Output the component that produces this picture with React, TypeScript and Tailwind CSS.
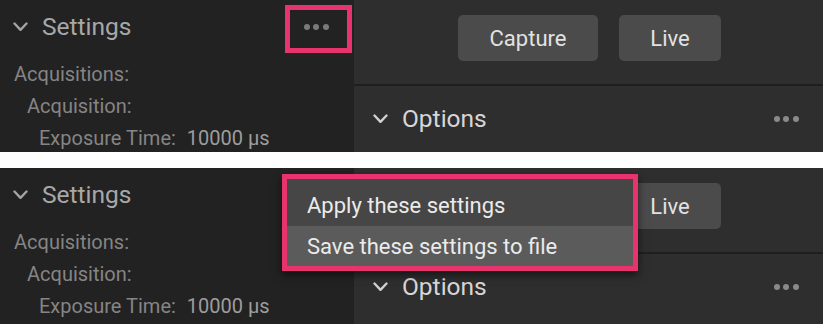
import React from "react";

const Chevron = ({ color }: { color: string }) => (
  <svg width="15" height="10" viewBox="0 0 15 10" fill="none">
    <path d="M1.5 1.5 L7.5 7.8 L13.5 1.5" stroke={color} strokeWidth="2.4" strokeLinecap="round" strokeLinejoin="round" />
  </svg>
);

const Dots = ({ color }: { color: string }) => (
  <div className="flex items-center gap-[3.6px]">
    <span className="block h-[6px] w-[6px] rounded-full" style={{ background: color }} />
    <span className="block h-[6px] w-[6px] rounded-full" style={{ background: color }} />
    <span className="block h-[6px] w-[6px] rounded-full" style={{ background: color }} />
  </div>
);

function Screen({ height, children }: { height: string; children?: React.ReactNode }) {
  return (
    <div className={`relative flex w-[823px] overflow-hidden ${height}`}>
      <div className="w-[354px] shrink-0 bg-[#222222]">
        <div className="flex h-[54px] items-center pl-[13px] pr-[25px]">
          <Chevron color="#a3a3a3" />
          <span className="ml-[14px] text-[24.5px] leading-none text-[#a8a8a8]">Settings</span>
          <div className="ml-auto">
            <Dots color="#7a7a7a" />
          </div>
        </div>
        <div className="mt-[4px] text-[20px] leading-[32px] text-[#858585]">
          <div className="pl-[14px]">Acquisitions:</div>
          <div className="pl-[27px]">Acquisition:</div>
          <div className="pl-[39px]">
            Exposure Time:<span className="ml-[11px] text-[#9d9d9d]">10000 µs</span>
          </div>
        </div>
      </div>
      <div className="flex-1 bg-[#2e2e2e]">
        <div className="flex h-[84px] justify-center gap-[21px] pt-[15px] pl-[2px]">
          <div className="flex h-[46px] w-[140px] items-center justify-center rounded-[5px] bg-[#4b4b4b] text-[22px] text-[#e2e2e2]">
            Capture
          </div>
          <div className="flex h-[46px] w-[102px] items-center justify-center rounded-[5px] bg-[#4b4b4b] text-[22px] text-[#e2e2e2]">
            Live
          </div>
        </div>
        <div className="h-[2px] bg-[#1f1f1f]" />
        <div className="flex h-[66px] items-center pl-[19px] pr-[24px]">
          <Chevron color="#d0d0d0" />
          <span className="ml-[14px] text-[24.5px] leading-none text-[#d6d6d6]">Options</span>
          <div className="ml-auto">
            <Dots color="#8a8a8a" />
          </div>
        </div>
      </div>
      {children}
    </div>
  );
}

export default function App() {
  return (
    <div
      className="flex h-[324px] w-[825px] flex-col gap-[16px] overflow-hidden bg-white"
      style={{ fontFamily: "Roboto, 'Noto Sans', sans-serif" }}
    >
      <Screen height="h-[152px]">
        <div className="absolute left-[285px] top-[5px] h-[48px] w-[67px] border-[5px] border-[#e8336f]" />
      </Screen>
      <Screen height="h-[156px]">
        <div className="absolute left-[282px] top-[6px] w-[356px] border-[5px] border-[#e8336f] shadow-[0_4px_8px_rgba(0,0,0,0.55)]">
          <div className="flex h-[47px] items-center bg-[#464646] pl-[20px] pt-[5px] text-[22px] text-[#ebebeb]">
            Apply these settings
          </div>
          <div className="flex h-[40px] items-center bg-[#5b5b5b] pl-[20px] text-[22px] text-[#ebebeb]">
            Save these settings to file
          </div>
        </div>
      </Screen>
    </div>
  );
}
